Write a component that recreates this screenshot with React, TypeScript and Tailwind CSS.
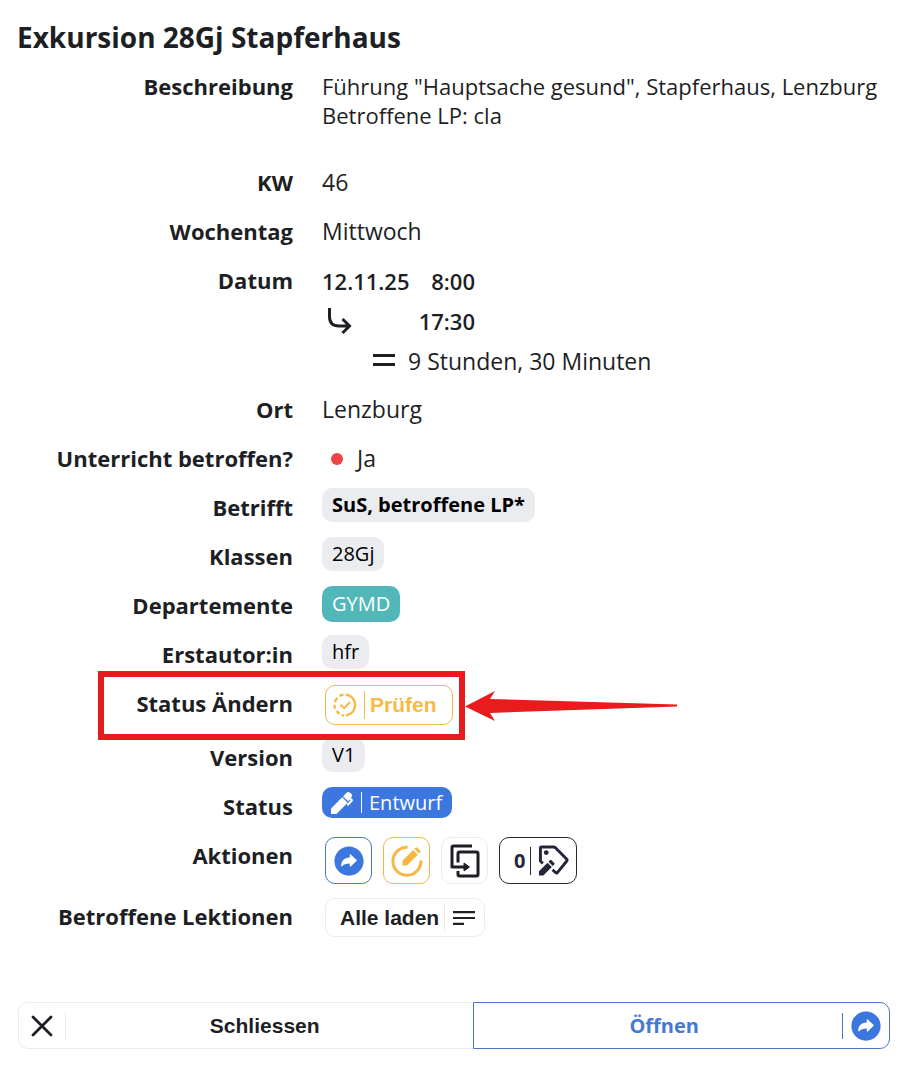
import type { ReactNode } from "react";
import { IoArrowRedoCircle } from "react-icons/io5";

function Row({ label, children, className = "" }: { label: string; children: ReactNode; className?: string }) {
  return (
    <div className={`relative grid grid-cols-[276px_minmax(0,1fr)] gap-x-[29px] ${className}`}>
      <dt className="whitespace-nowrap py-[10px] text-right text-[22px] font-bold leading-[29px]">{label}</dt>
      <dd>{children}</dd>
    </div>
  );
}

function Chip({ children, className = "bg-[#ebecf0] text-black h-[34px]" }: { children: ReactNode; className?: string }) {
  return (
    <div className="flex h-[49px] items-start pt-[5px]">
      <span className={`flex items-center rounded-[10px] px-[10px] text-[20px] ${className}`}>{children}</span>
    </div>
  );
}

function TurnArrow() {
  return (
    <svg viewBox="0 0 28 28" className="ml-1 size-7" fill="none" stroke="currentColor" strokeWidth="3" aria-hidden="true">
      <path d="M3.500 1v8.500q0 9.500 9.500 9.500H24M16.500 12l7 7-7 7" />
    </svg>
  );
}

function CheckRing() {
  return (
    <svg viewBox="0 0 24 24" className="size-6" fill="none" stroke="currentColor" strokeWidth="2.400" aria-hidden="true">
      <path d="M13 1.500A10.600 10.600 0 0 1 13 22.500M10.500 1.500a10.600 10.600 0 0 0-4 1.600M4.400 4.800A10.600 10.600 0 0 0 1.800 9M1.400 11.800q0 2.200.8 4M3.600 18q1.300 1.700 3 2.800M8.500 22q1 .4 2.400.500" />
      <path d="m7.500 11.800 3.700 3.400L17 9" strokeWidth="2" />
    </svg>
  );
}

function Pen() {
  return (
    <svg viewBox="0 0 24 24" className="size-6" fill="currentColor" aria-hidden="true">
      <path d="M1 23v-5.500L12.200 6.300l5.400 5.400L6.500 23H1Z" />
      <path d="m13 5.400 3.600-3.600q1.200-1.200 2.500-.5l2.300 1.500q1.500 1.300.4 2.700l-.8 1.300 1.700 1.600q.6 1-.3 2l-4.300 4.600-1.500-1.500 3.900-4.100-.6-.8-1.600 1.700L13 5.400Z" />
    </svg>
  );
}

function EditRing() {
  return (
    <svg viewBox="0 0 32 32" className="size-8" fill="none" stroke="currentColor" aria-hidden="true">
      <path d="M16.500 2.300A14 14 0 1 0 29.900 15.500" strokeWidth="3" />
      <path d="M11.500 15.800 22.200 5.100l4.600 4.600L16.100 20.400h-4.600v-4.600Z" fill="currentColor" stroke="none" />
      <path d="m23.300 4 1.300-1.300q.8-.7 1.600 0l3 3q.7.800 0 1.600l-1.300 1.300L23.300 4Z" fill="currentColor" stroke="none" />
    </svg>
  );
}

function CopyInto() {
  return (
    <svg viewBox="0 0 30 34" className="h-[34px] w-[30px]" fill="none" stroke="currentColor" strokeWidth="3" strokeLinejoin="round" aria-hidden="true">
      <path d="M22 2H3.500Q2 2 2 3.500V23h13" />
      <path d="M8 18.500V9.500Q8 8 9.500 8h17Q28 8 28 9.500v21q0 1.500-1.500 1.500h-17Q8 32 8 30.500V27" />
      <path d="m14 19 5.500 4-5.500 4Z" fill="currentColor" strokeWidth="1" />
    </svg>
  );
}

function TagPen() {
  return (
    <svg viewBox="0 0 32 32" className="size-[31px]" fill="none" stroke="currentColor" strokeWidth="3" strokeLinejoin="round" aria-hidden="true">
      <path d="M5 19 2.500 16.500V3Q2.500 2 3.500 2H16q1 0 2 .8L29.500 14.500q1 1.200 0 2.300L20 28.500q-.8.800-1.700 0L15 25.500" />
      <circle cx="8.500" cy="7.800" r="2.500" fill="currentColor" stroke="none" />
      <path d="M1 31.500V27l8.800-8.800 4.500 4.500L5.500 31.500H1Zm9.800-14.300 1.500-1.500q.8-.8 1.600 0l2.900 2.900q.8.800 0 1.600l-1.500 1.500-4.500-4.500Z" fill="currentColor" stroke="none" />
    </svg>
  );
}

const iconButton = "flex h-[47px] w-[47px] items-center justify-center rounded-[10px] border";

export default function App() {
  return (
    <main className="bg-white px-[17px] pt-[12px] pb-[18px] font-['Open_Sans',sans-serif] text-[23px] text-[#1d1f24]">
      <h1 className="h-[50px] text-[28px] font-bold leading-[50px]">Exkursion 28Gj Stapferhaus</h1>
      <dl>
        <Row label="Beschreibung" className="min-h-24">
          <p className="py-[10px] text-[22px] leading-[29px]">
            Führung "Hauptsache gesund", Stapferhaus, Lenzburg
            <br />
            Betroffene LP: cla
          </p>
        </Row>
        <Row label="KW"><p className="leading-[49px]">46</p></Row>
        <Row label="Wochentag"><p className="leading-[49px]">Mittwoch</p></Row>
        <Row label="Datum">
          <div className="pt-[5px] pb-1 leading-[40px]">
            <div className="flex w-[153px] justify-between text-[22px] font-semibold"><span>12.11.25</span><span>8:00</span></div>
            <div className="flex w-[153px] items-center justify-between text-[22px] font-semibold"><TurnArrow /><span>17:30</span></div>
            <div className="flex items-center pl-[50px]">
              <svg viewBox="0 0 24 14" className="mr-3 h-[14px] w-6" fill="currentColor" aria-hidden="true"><path d="M1 0h22v3H1zM1 9h22v3H1z" /></svg>
              <span>9 Stunden, 30 Minuten</span>
            </div>
          </div>
        </Row>
        <Row label="Ort"><p className="leading-[49px]">Lenzburg</p></Row>
        <Row label="Unterricht betroffen?">
          <div className="flex items-center gap-[14px] pl-[9px] leading-[49px]"><span className="size-3 rounded-full bg-[#f04444]" />Ja</div>
        </Row>
        <Row label="Betrifft"><Chip className="h-[34px] bg-[#ebecf0] font-bold text-black">SuS, betroffene LP*</Chip></Row>
        <Row label="Klassen"><Chip>28Gj</Chip></Row>
        <Row label="Departemente"><Chip className="h-9 bg-[#52b7b9] text-white">GYMD</Chip></Row>
        <Row label="Erstautor:in"><Chip>hfr</Chip></Row>
        <Row label="Status Ändern" className="min-h-[54px]">
          <button type="button" className="mt-[6px] ml-[3px] flex h-10 items-center rounded-[10px] border border-[#ecb94f] pr-[15px] pl-[7px] font-['Liberation_Sans',sans-serif] text-[21px] font-bold text-[#f5bb45]">
            <CheckRing />
            <span className="ml-[7px] h-7 border-l border-current pl-[5px] leading-[28px]">Prüfen</span>
          </button>
          <div className="pointer-events-none absolute -top-2 left-[81px] z-10 flex items-center" aria-hidden="true">
            <div className="h-[69px] w-[367px] border-[6px] border-[#e81c1c]" />
            <svg viewBox="0 0 212 30" className="h-[30px] w-[212px] fill-[#e81c1c]">
              <path d="M0 15.500 30 0l-5 8 187 5.500v2L25 22l5 8Z" />
            </svg>
          </div>
        </Row>
        <Row label="Version"><Chip>V1</Chip></Row>
        <Row label="Status">
          <Chip className="h-[31px] bg-[#3b77de] text-white">
            <span className="-ml-[2px]"><Pen /></span>
            <span className="ml-[7px] h-[21px] border-l border-white pl-[7px] leading-[21px]">Entwurf</span>
          </Chip>
        </Row>
        <Row label="Aktionen" className="min-h-[61px]">
          <div className="flex gap-[11px] pt-[6px] pl-[3px]">
            <button type="button" aria-label="Öffnen" className={`${iconButton} border-[#4778c4] text-[#3b77de]`}><IoArrowRedoCircle className="size-9" /></button>
            <button type="button" aria-label="Bearbeiten" className={`${iconButton} border-[#f0b849] text-[#f5b942]`}><EditRing /></button>
            <button type="button" aria-label="Duplizieren" className={`${iconButton} border-[#ececef]`}><CopyInto /></button>
            <button type="button" aria-label="Tags bearbeiten" className="flex h-[47px] items-center rounded-[10px] border border-[#24273a] pr-[7px] pl-[14px] text-[20px] font-bold text-[#24273a]">
              <span className="mr-[5px]">0</span>
              <span className="flex h-7 items-center border-l border-current pl-[7px]"><TagPen /></span>
            </button>
          </div>
        </Row>
        <Row label="Betroffene Lektionen" className="min-h-[61px]">
          <button type="button" className="mt-[6px] ml-[3px] flex h-[39px] items-center rounded-[10px] border border-[#ececef] pr-[9px] pl-[14px] font-['Liberation_Sans',sans-serif] text-[21px] font-bold">
            Alle laden
            <span className="ml-[5px] flex h-7 items-center border-l border-[#ececef] pl-2">
              <svg viewBox="0 0 22 16" className="h-4 w-[22px]" fill="currentColor" aria-hidden="true"><path d="M0 1h22v2.200H0zM0 6.900h22v2.200H0zM0 12.800h11V15H0z" /></svg>
            </span>
          </button>
        </Row>
      </dl>
      <footer className="mt-[49px] ml-px mr-[2px] flex font-bold">
        <button type="button" className="flex h-[47px] flex-[456] items-center rounded-l-[10px] border border-r-0 border-[#ececef] font-['Liberation_Sans',sans-serif] text-[21px]">
          <span className="flex h-7 w-[47px] items-center justify-center border-r border-[#ececef]">
            <svg viewBox="0 0 22 22" className="size-[22px]" fill="none" stroke="currentColor" strokeWidth="2.800" strokeLinecap="round" aria-hidden="true"><path d="m2 2 18 18M20 2 2 20" /></svg>
          </span>
          <span className="flex-1 pr-[10px]">Schliessen</span>
        </button>
        <button type="button" className="flex h-[47px] flex-[416] items-center rounded-r-[10px] border border-[#4778c4] text-[20px] text-[#4479d2]">
          <span className="flex-1 pl-3">Öffnen</span>
          <span className="flex h-[26px] w-[47px] items-center justify-center border-l border-[#4778c4] text-[#3b77de]"><IoArrowRedoCircle className="size-9" /></span>
        </button>
      </footer>
    </main>
  );
}
